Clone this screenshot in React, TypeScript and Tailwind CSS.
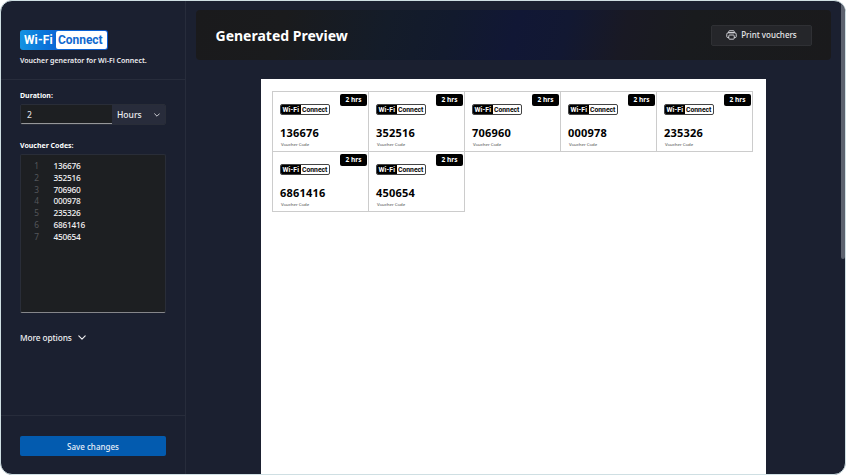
const CODES = ['136676', '352516', '706960', '000978', '235326', '6861416', '450654'];

function Logo() {
  return (
    <div className="flex h-[20px] w-[88px] rounded-[3px] bg-gradient-to-r from-[#1593e2] via-[#0b67d6] via-40% to-[#0b5cd0] p-px font-[Roboto,sans-serif] text-[12px] leading-[19px] font-bold whitespace-nowrap">
      <span className="w-[35px] pl-[3px] tracking-[0.1px] text-white">Wi-Fi</span>
      <span className="w-[51px] rounded-[2px] bg-white pl-[2px] tracking-[-0.05px] text-[#1269cf]">Connect</span>
    </div>
  );
}

function MonoLogo() {
  return (
    <div className="flex h-[11px] w-[50px] overflow-hidden rounded-[2px] border border-[#444] bg-white font-[Roboto,sans-serif] text-[6.8px] leading-[10px] font-bold whitespace-nowrap">
      <span className="w-[20px] shrink-0 bg-black pl-[1.5px] tracking-[0.15px] text-white">Wi-Fi</span>
      <span className="pl-[1px] text-black">Connect</span>
    </div>
  );
}

function Chevron({ className }: { className: string }) {
  return (
    <svg className={className} viewBox="0 0 10 6" fill="none" stroke="currentColor" strokeWidth="1.4" strokeLinecap="round" strokeLinejoin="round">
      <path d="M1 1l4 4 4-4" />
    </svg>
  );
}

function Printer() {
  return (
    <svg className="h-[10px] w-[11px]" viewBox="0 0 12 11" fill="none" stroke="#dedee2" strokeWidth="1" strokeLinejoin="round">
      <path d="M3 3V1.6Q3 .8 3.8 .8h4.4Q9 .8 9 1.6V3M3 8.3H1.8Q.8 8.3 .8 7.3V4.7Q.8 3 2.5 3h7q1.7 0 1.7 1.7v2.6q0 1-1 1H9M2.5 3h7" />
      <rect x="3" y="5.5" width="6" height="4.6" rx="1" />
    </svg>
  );
}

function Voucher({ code }: { code: string }) {
  return (
    <div className="relative -mr-px -mb-px h-[61px] w-[97px] border border-[#cccccc] pt-[12px] pl-[7px]">
      <MonoLogo />
      <div className="mt-[10px] h-[16px] font-[Noto_Sans,sans-serif] text-[11px] leading-[16px] font-bold tracking-[0.2px] text-black">{code}</div>
      <div className="mt-px pl-px font-[Noto_Sans,sans-serif] text-[4.3px] leading-[5px] text-[#444]">Voucher Code</div>
      <div className="absolute top-[2px] right-[1px] h-[12px] w-[27px] rounded-[2px] bg-black text-center text-[6.5px] leading-[12px] font-bold text-white">2 hrs</div>
    </div>
  );
}

export default function App() {
  return (
    <div className="h-[476px] w-[846px] overflow-hidden bg-white font-[Noto_Sans,sans-serif] text-white">
      <div className="flex h-[475px] w-[846px] overflow-hidden rounded-[12px] border border-[#cfdfe3] bg-[#1b2030]">
        <aside className="flex w-[185px] shrink-0 flex-col border-r border-[#272c3b]">
          <header className="h-[79px] border-b border-[#272c3b] pt-[29px] pl-[19px]">
            <Logo />
            <p className="mt-[5px] text-[7px] leading-[12px] font-semibold tracking-[0.01px] whitespace-nowrap text-[#eeeef1]">Voucher generator for Wi-Fi Connect.</p>
          </header>
          <div className="flex-1 pt-[10px] pl-[19px]">
            <label className="block text-[7px] leading-[11px] font-bold">Duration:</label>
            <div className="mt-[3px] flex h-[21px] w-[146px] overflow-hidden rounded-[2px] border border-[#292d38] text-[8.5px] leading-[20px] font-medium">
              <div className="w-[91px] border-b border-[#96979a] bg-[#1d1f22] pl-[6px] text-[#dedee0]">2</div>
              <div className="flex flex-1 items-center justify-between bg-[#282c3b] pr-[5px] pl-[5px] text-[#ececef]">
                <span>Hours</span>
                <Chevron className="h-[4px] w-[6px]" />
              </div>
            </div>
            <label className="mt-[15px] block text-[7px] leading-[12px] font-bold">Voucher Codes:</label>
            <div className="mt-[2px] h-[159px] w-[146px] rounded-[2px] border border-[#292d38] border-b-[#85868a] bg-[#1d1f22] pt-[5px]">
              {CODES.map((code, i) => (
                <div key={code} className="flex h-[11.8px] text-[8.3px] leading-[12px]">
                  <span className="w-[18px] text-right text-[#54565a]">{i + 1}</span>
                  <span className="pl-[14.5px] font-medium tracking-[-0.25px] text-[#f0f0f1]">{code}</span>
                </div>
              ))}
            </div>
            <div className="mt-[18px] flex items-center gap-[6px] text-[8.3px] leading-[14px] font-medium text-[#f0f0f2]">
              <span className="tracking-[-0.1px]">More options</span>
              <Chevron className="-mt-px h-[5px] w-[8px]" />
            </div>
          </div>
          <footer className="h-[59px] border-t border-[#272c3b] pt-[20px] pl-[19px]">
            <button className="block h-[20px] w-[146px] rounded-[2px] bg-[#035baf] text-[8px] leading-[21px] font-medium text-[#e6eef8]">Save changes</button>
          </footer>
        </aside>
        <main className="flex flex-1 flex-col pt-[9px] pl-[10px]">
          <div className="flex h-[50px] w-[635px] shrink-0 items-center justify-between rounded-[4px] bg-[linear-gradient(105deg,#1a1a1c_0%,#1a1b1d_14%,#141c29_30%,#121a2d_40%,#111735_50%,#121832_58%,#191924_67%,#191b1e_77%,#1a1a1c_100%)] px-[19px]">
            <h1 className="pt-[2px] pl-[0.5px] text-[14px] leading-[20px] font-bold">Generated Preview</h1>
            <button className="flex h-[21px] w-[101px] items-center justify-center gap-[4px] rounded-[2px] border border-[#2f3034] bg-[#25262a] text-[8px] font-medium text-[#e8e8ea]">
              <Printer />
              <span>Print vouchers</span>
            </button>
          </div>
          <div className="mt-[19px] ml-[65px] w-[505px] flex-1 bg-white pt-[12px] pl-[11px]">
            <div className="flex w-[482px] flex-wrap">
              {CODES.map((code) => (
                <Voucher key={code} code={code} />
              ))}
            </div>
          </div>
        </main>
        <div className="h-[258px] w-[4px] shrink-0 rounded-b-[2px] bg-[#5d626f]" />
      </div>
    </div>
  );
}
